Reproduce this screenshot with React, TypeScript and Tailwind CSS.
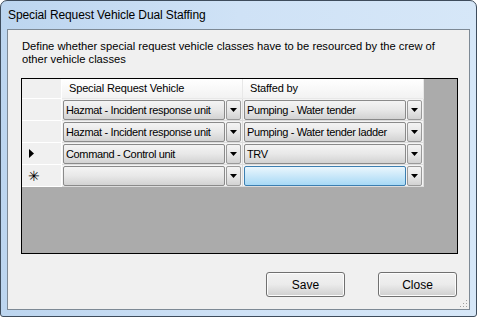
import React from "react";

type ComboProps = { value: string; focused?: boolean };

const Arrow = () => (
  <svg width="7" height="4" viewBox="0 0 7 4" className="block">
    <path d="M0 0h7L3.5 4z" fill="#000" />
  </svg>
);

const Combo = ({ value, focused }: ComboProps) => (
  <div className="flex h-[20px] w-full">
    <div
      className={`flex-1 flex items-center pl-[2px] rounded-[2px] border overflow-hidden whitespace-nowrap tracking-[-0.35px] ${
        focused
          ? "border-[#3c7fb1] bg-gradient-to-b from-[#eaf6fd] to-[#a7d9f5]"
          : "border-[#8a8a8a] bg-gradient-to-b from-[#f4f4f4] via-[#e8e8e8] to-[#d2d2d2]"
      }`}
    >
      {value}
    </div>
    <div className="w-[15px] ml-[1px] flex items-center justify-center rounded-[2px] border border-[#9a9a9a] bg-gradient-to-b from-[#f4f4f4] via-[#e8e8e8] to-[#d2d2d2]">
      <Arrow />
    </div>
  </div>
);

const rows: { a: string; b: string; mark?: "current" | "new" }[] = [
  { a: "Hazmat - Incident response unit", b: "Pumping - Water tender" },
  { a: "Hazmat - Incident response unit", b: "Pumping - Water tender ladder" },
  { a: "Command - Control unit", b: "TRV", mark: "current" },
  { a: "", b: "", mark: "new" },
];

const WinButton = ({ label }: { label: string }) => (
  <button className="w-[79px] h-[25px] rounded-[3px] border border-[#707070] bg-gradient-to-b from-[#f2f2f2] via-[#ebebeb] to-[#cfcfcf] text-[12px] text-black shadow-[inset_0_0_0_1px_#fcfcfc]">
    {label}
  </button>
);

const App = () => {
  return (
    <div
      className="w-[477px] h-[317px] flex flex-col border border-[#3e4c5c] rounded-t-[7px] rounded-b-[3px] bg-gradient-to-r from-[#bcd5ef] via-[#cfe2f6] to-[#d6e7f8] text-black"
      style={{ fontFamily: '"Liberation Sans", Arial, sans-serif' }}
    >
      <div className="h-[28px] flex items-center pl-[7px] text-[12px] tracking-[-0.1px] text-black">
        Special Request Vehicle Dual Staffing
      </div>
      <div className="relative mx-[6px] mb-[6px] flex-1 flex flex-col border border-[#7d8995] bg-[#f0f0f0]">
        <p className="mt-[10px] ml-[14px] w-[420px] text-[11.2px] leading-[13px]">
          Define whether special request vehicle classes have to be resourced by the crew of
          other vehicle classes
        </p>

        <div className="mt-[12px] ml-[13px] w-[437px] h-[176px] border border-black bg-[#ababab] text-[11px]">
          <div className="flex h-[20px]">
            <div className="w-[40px] bg-[#f0f0f0] border-r border-b border-white" />
            <div className="w-[181px] pl-[7px] flex items-center tracking-[-0.15px] bg-gradient-to-b from-white to-[#f2f2f2] border-r border-b border-[#e8e8e8]">
              Special Request Vehicle
            </div>
            <div className="w-[181px] pl-[7px] flex items-center tracking-[-0.15px] bg-gradient-to-b from-white to-[#f2f2f2] border-r border-b border-[#e8e8e8]">
              Staffed by
            </div>
          </div>
          {rows.map((r, i) => (
            <div key={i} className="flex h-[22px]">
              <div className="w-[40px] flex items-center pl-[7px] bg-[#f0f0f0] border-r border-b border-white">
                {r.mark === "current" && (
                  <svg width="5" height="9" viewBox="0 0 5 9">
                    <path d="M0 0l5 4.5L0 9z" fill="#000" />
                  </svg>
                )}
                {r.mark === "new" && <span className="text-[14px] leading-none -ml-[1px]">✳</span>}
              </div>
              <div className="w-[181px] px-[1px] pt-[1px] bg-[#f4f4f4] border-r border-b border-[#dcdcdc]">
                <Combo value={r.a} />
              </div>
              <div className="w-[181px] px-[1px] pt-[1px] bg-[#f4f4f4] border-r border-b border-[#dcdcdc]">
                <Combo value={r.b} focused={r.mark === "new"} />
              </div>
            </div>
          ))}
        </div>

        <div className="mt-[18px] mr-[12px] flex justify-end gap-[33px]">
          <WinButton label="Save" />
          <WinButton label="Close" />
        </div>

        <svg width="10" height="10" viewBox="0 0 10 10" className="absolute right-[1px] bottom-[1px]">
          {[
            [8, 2],
            [5, 5],
            [8, 5],
            [2, 8],
            [5, 8],
            [8, 8],
          ].map(([x, y], k) => (
            <rect key={k} x={x} y={y} width="1" height="1" fill="#a0a0a0" />
          ))}
        </svg>
      </div>
    </div>
  );
};

export default App;
